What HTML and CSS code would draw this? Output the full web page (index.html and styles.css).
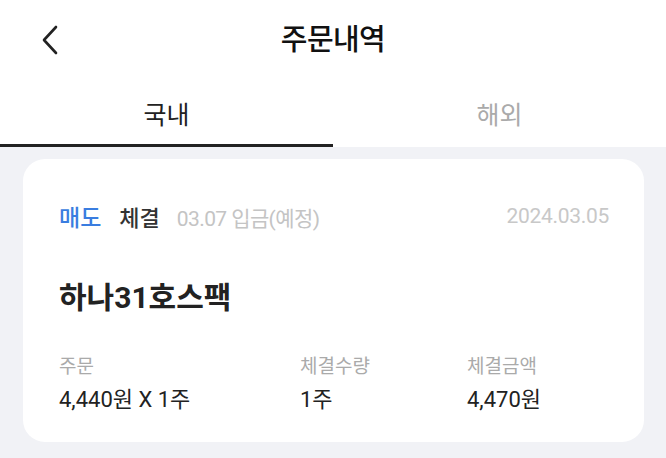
FILE: index.html
```html
<!DOCTYPE html>
<html lang="ko">
<head>
<meta charset="utf-8">
<link rel="stylesheet" href="styles.css">
</head>
<body>
<div class="page">
  <header class="topbar">
    <button class="back" aria-label="뒤로">
      <svg width="20" height="32" viewBox="0 0 20 32"><path d="M16 3 L4 16 L16 29" fill="none" stroke="#222" stroke-width="2.6" stroke-linecap="round" stroke-linejoin="round"/></svg>
    </button>
    <h1 class="title">주문내역</h1>
  </header>
  <nav class="tabs">
    <div class="tab active">국내</div>
    <div class="tab">해외</div>
  </nav>
  <main class="content">
    <section class="card">
      <div class="meta">
        <div class="meta-left">
          <span class="side">매도</span>
          <span class="status">체결</span>
          <span class="settle">03.07 입금(예정)</span>
        </div>
        <span class="date">2024.03.05</span>
      </div>
      <div class="name">하나31호스팩</div>
      <div class="stats">
        <div class="label">주문</div>
        <div class="label">체결수량</div>
        <div class="label">체결금액</div>
        <div class="value">4,440원 X 1주</div>
        <div class="value">1주</div>
        <div class="value">4,470원</div>
      </div>
    </section>
  </main>
</div>
</body>
</html>
```
FILE: styles.css
```css
* { box-sizing: border-box; }
html, body { margin: 0; padding: 0; }
body {
  font-family: Roboto, "Noto Sans CJK KR", "Noto Sans", sans-serif;
  background: #f1f2f6;
  color: #222;
  width: 666px;
  height: 458px;
  overflow: hidden;
}
.page { display: flex; flex-direction: column; }
.topbar {
  background: #fff;
  height: 80px;
  display: flex;
  align-items: center;
  justify-content: center;
  position: relative;
}
.back {
  position: absolute;
  left: 40px;
  top: 24px;
  background: none;
  border: 0;
  padding: 0;
  width: 20px;
  height: 32px;
}
.title {
  margin: 0;
  font-size: 29px;
  font-weight: 500;
  line-height: 36px;
  color: #111;
  letter-spacing: -0.6px;
}
.tabs {
  background: #fff;
  display: flex;
  height: 67px;
}
.tab {
  flex: 1;
  display: flex;
  align-items: center;
  justify-content: center;
  font-size: 25px;
  color: #aaa;
  padding-top: 2px;
  border-bottom: 3px solid transparent;
}
.tab.active {
  color: #222;
  border-bottom-color: #222;
}
.content { padding: 12px 22px 0 23px; }
.card {
  background: #fff;
  border-radius: 22px;
  padding: 43px 36px 28px 36px;
}
.meta {
  display: flex;
  justify-content: space-between;
  align-items: center;
  height: 28px;
}
.meta-left { display: flex; align-items: baseline; }
.side { color: #3a7de0; font-size: 23px; font-weight: 500; margin-right: 18px; }
.status { color: #333; font-size: 22px; font-weight: 500; margin-right: 17px; }
.settle { color: #c4c4c4; font-size: 21px; letter-spacing: -0.6px; }
.date { color: #c8c8c8; font-size: 21px; margin-right: -1px; letter-spacing: -0.3px; }
.name {
  margin-top: 50px;
  font-size: 30px;
  font-weight: 700;
  line-height: 36px;
  color: #222;
}
.stats {
  margin-top: 38px;
  display: grid;
  grid-template-columns: 241px 167px 1fr;
  row-gap: 6px;
}
.label { font-size: 19px; line-height: 26px; color: #aaa; }
.value { font-size: 22px; line-height: 28px; color: #222; }
```
